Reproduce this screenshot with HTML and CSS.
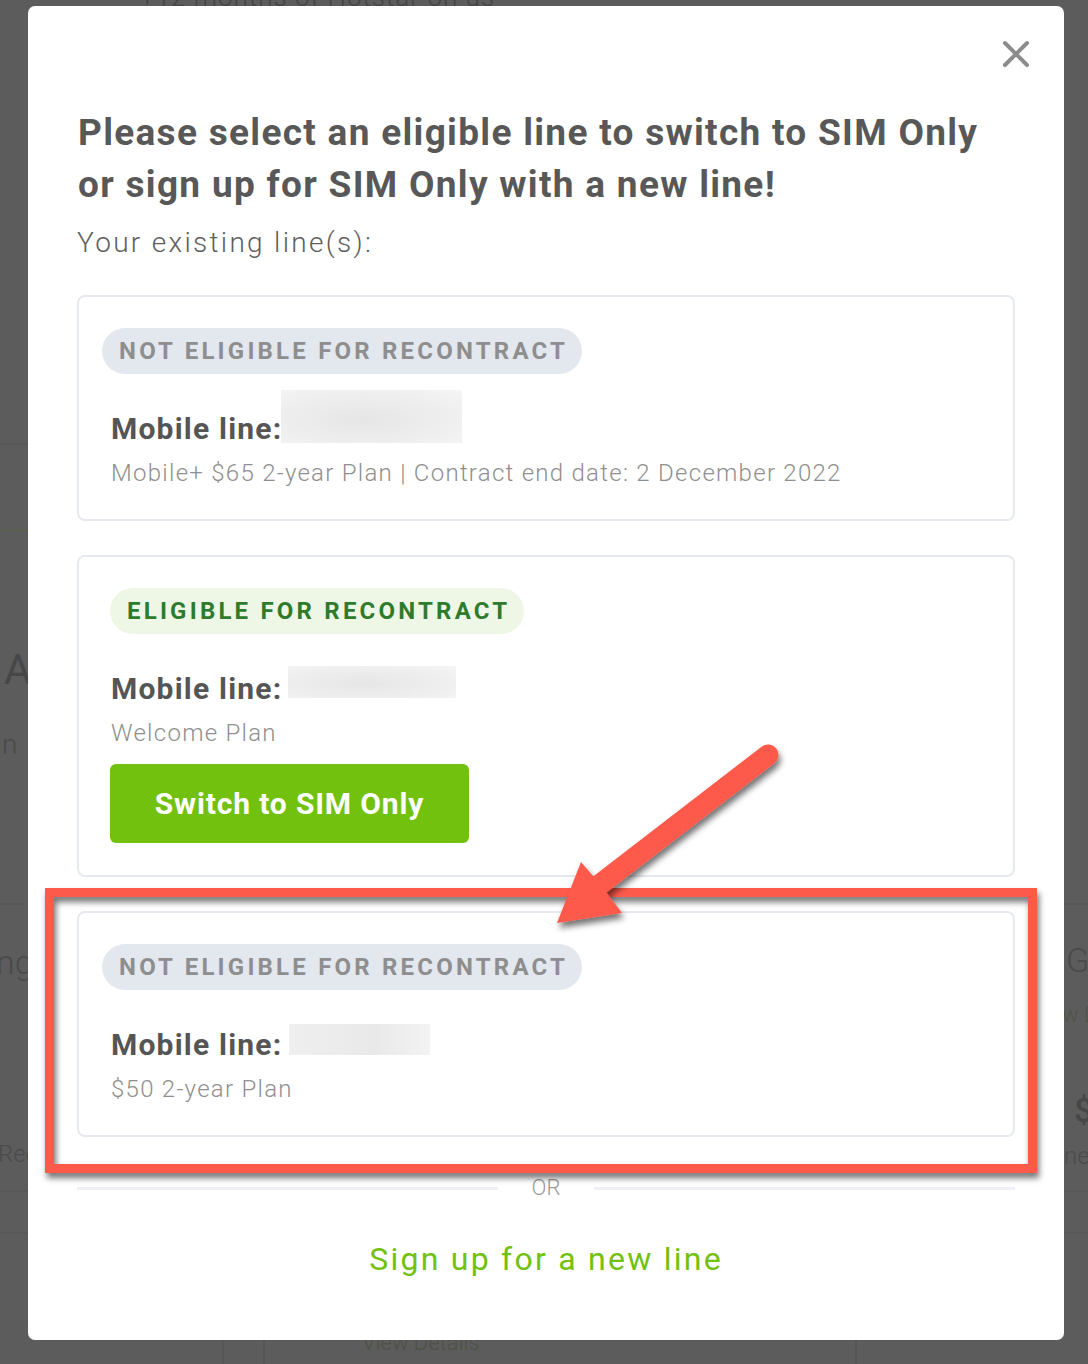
FILE: index.html
```html
<!DOCTYPE html>
<html lang="en">
<head>
<meta charset="utf-8">
<title>Switch to SIM Only</title>
<link rel="stylesheet" href="styles.css">
</head>
<body>
<div class="backdrop">
  <span class="bg-frag bg-top">+12 months of Hotstar on us</span>
  <span class="bg-rule bg-rule-a"></span>
  <span class="bg-rule bg-rule-green"></span>
  <span class="bg-frag bg-a">A</span>
  <span class="bg-frag bg-n">n</span>
  <span class="bg-rule bg-rule-b"></span>
  <span class="bg-frag bg-ng">ng</span>
  <span class="bg-frag bg-red">Rec</span>
  <span class="bg-rule bg-rule-c"></span>
  <span class="bg-rule bg-rule-d"></span>
  <span class="bg-frag bg-g">G</span>
  <span class="bg-frag bg-wd">w D</span>
  <span class="bg-frag bg-dollar">$</span>
  <span class="bg-frag bg-ne">ne</span>
  <span class="bg-vline bg-v1"></span>
  <span class="bg-vline bg-v2"></span>
  <span class="bg-vline bg-v3"></span>
  <span class="bg-frag bg-view">View Details</span>
</div>

<div class="modal">
  <div class="modal-top">
    <button class="close" aria-label="Close">
      <svg width="28" height="28" viewBox="0 0 28 28"><path d="M3 3 L25 25 M25 3 L3 25" stroke="#8c8c8c" stroke-width="4" stroke-linecap="round" fill="none"/></svg>
    </button>
  </div>
  <h1 class="title">Please select an eligible line to switch to SIM Only<br>or sign up for SIM Only with a new line!</h1>
  <p class="subtitle">Your existing line(s):</p>

  <div class="lines">
    <div class="card">
      <span class="badge badge-no">NOT ELIGIBLE FOR RECONTRACT</span>
      <div class="line-row"><span class="line-label">Mobile line:</span><span class="redacted r1"></span></div>
      <p class="plan">Mobile+ $65 2-year Plan | Contract end date: 2 December 2022</p>
    </div>
    <div class="card">
      <span class="badge badge-yes">ELIGIBLE FOR RECONTRACT</span>
      <div class="line-row"><span class="line-label">Mobile line:</span><span class="redacted r2"></span></div>
      <p class="plan">Welcome Plan</p>
      <button class="switch">Switch to SIM Only</button>
    </div>
    <div class="card">
      <span class="badge badge-no">NOT ELIGIBLE FOR RECONTRACT</span>
      <div class="line-row"><span class="line-label">Mobile line:</span><span class="redacted r3"></span></div>
      <p class="plan">$50 2-year Plan</p>
    </div>
  </div>

  <div class="divider"><span class="rule"></span><span class="or">OR</span><span class="rule"></span></div>
  <div class="signup-wrap"><a class="signup" href="#">Sign up for a new line</a></div>
</div>

<svg class="annotation" width="1088" height="1364" viewBox="0 0 1088 1364">
  <defs>
    <filter id="shadow" x="-10%" y="-10%" width="120%" height="130%">
      <feDropShadow dx="2" dy="5" stdDeviation="3" flood-color="#000" flood-opacity="0.55"/>
    </filter>
  </defs>
  <rect x="49.5" y="892.5" width="983" height="276" fill="none" stroke="#fe5a4b" stroke-width="9" filter="url(#shadow)"/>
  <g filter="url(#shadow)" fill="#fe5a4b">
    <path d="M768 755 L594 889" stroke="#fe5a4b" stroke-width="21" stroke-linecap="round" fill="none"/>
    <polygon points="557,923 581,862 600,884 622,913"/>
  </g>
</svg>
</body>
</html>
```

FILE: styles.css
```css
* { box-sizing: border-box; }

html, body {
  margin: 0;
  padding: 0;
}

body {
  width: 1088px;
  height: 1364px;
  background: #5c5c5c;
  font-family: Roboto, "Liberation Sans", Arial, sans-serif;
  overflow: hidden;
  position: relative;
}

/* underlying page, dimmed by the overlay */
.backdrop {
  position: absolute;
  inset: 0;
  color: #484848;
}
.bg-frag { position: absolute; white-space: nowrap; font-weight: 300; }
.bg-top { left: 140px; top: -18px; font-size: 26px; letter-spacing: 1px; color: #444; }
.bg-a { left: 4px; top: 645px; font-size: 42px; font-weight: 400; color: #474747; }
.bg-n { left: 2px; top: 728px; font-size: 28px; color: #4a4a4a; }
.bg-ng { left: -4px; top: 942px; font-size: 34px; color: #4a4a4a; }
.bg-red { left: -2px; top: 1140px; font-size: 24px; color: #4b4b4b; }
.bg-g { left: 1066px; top: 940px; font-size: 34px; color: #4a4a4a; }
.bg-wd { left: 1062px; top: 1002px; font-size: 22px; color: #4e5446; }
.bg-dollar { left: 1074px; top: 1090px; font-size: 34px; font-weight: 500; color: #474747; }
.bg-ne { left: 1064px; top: 1142px; font-size: 24px; color: #4b4b4b; }
.bg-view { left: 362px; top: 1330px; font-size: 22px; color: #4c5244; }
.bg-rule { position: absolute; height: 2px; background: #555; }
.bg-rule-a { left: 0; width: 28px; top: 443px; background: #575757; }
.bg-rule-green { left: 0; width: 28px; top: 529px; background: #59604e; }
.bg-rule-b { left: 0; width: 1088px; top: 903px; background: #585858; }
.bg-rule-c { left: 0; width: 1088px; top: 1190px; background: #585858; }
.bg-rule-d { left: 0; width: 1088px; top: 1232px; background: #585858; }
.bg-vline { position: absolute; width: 2px; top: 1340px; height: 24px; background: #565656; }
.bg-v1 { left: 222px; }
.bg-v2 { left: 263px; }
.bg-v3 { left: 855px; }

/* modal */
.modal {
  position: absolute;
  left: 28px;
  top: 6px;
  width: 1036px;
  height: 1334px;
  background: #fff;
  border-radius: 7px;
  padding: 0 49px 0 49px;
  display: flex;
  flex-direction: column;
}

.modal-top {
  display: flex;
  justify-content: flex-end;
  margin-top: 34px;
  margin-right: -15px;
  height: 28px;
}
.close {
  border: 0;
  padding: 0;
  background: none;
  width: 28px;
  height: 28px;
  display: block;
}
.close svg { display: block; }

.title {
  margin: 39px 0 0 1px;
  font-size: 37px;
  line-height: 52px;
  font-weight: 700;
  color: #585858;
  letter-spacing: 1.3px;
  white-space: nowrap;
}

.subtitle {
  margin: 14px 0 0 0;
  font-size: 28px;
  line-height: 36px;
  font-weight: 300;
  color: #5e5e5e;
  letter-spacing: 2.3px;
}

.lines {
  margin-top: 34px;
  display: flex;
  flex-direction: column;
  gap: 34px;
}

.card {
  border: 2px solid #e6e9ef;
  border-radius: 8px;
  padding: 31px 30px 30px 32px;
  display: flex;
  flex-direction: column;
  align-items: flex-start;
}

.badge {
  display: inline-flex;
  align-items: center;
  height: 46px;
  padding: 0 14px 0 17px;
  border-radius: 23px;
  font-size: 24px;
  font-weight: 700;
  letter-spacing: 3.2px;
  white-space: nowrap;
}
.badge-no {
  margin-left: -9px;
  background: #e3e7ee;
  color: #8e8e8e;
}
.badge-yes {
  margin-left: -1px;
  background: #eef7e5;
  color: #2f7b2d;
}

.line-row {
  margin-top: 35px;
  display: flex;
  align-items: flex-end;
  height: 40px;
}
.line-label {
  font-size: 30px;
  line-height: 40px;
  font-weight: 700;
  color: #555;
  letter-spacing: 1.2px;
}
.redacted {
  display: block;
  background: radial-gradient(ellipse at 45% 55%, #e6e6e6 0%, #ececec 45%, #f5f5f6 100%);
}
.r1 { width: 181px; height: 53px; margin: -19px 0 6px -1px; }
.r2 { width: 168px; height: 32px; margin: 0 0 11px 6px; }
.r3 { width: 141px; height: 31px; margin: 0 0 10px 7px; background: linear-gradient(90deg, #efefef, #e9e9e9 60%, #f3f3f3); }

.plan {
  margin: 8px 0 0 0;
  font-size: 24px;
  line-height: 32px;
  font-weight: 300;
  color: #8f8f8f;
  letter-spacing: 1.27px;
}

.switch {
  margin: 15px 0 2px -1px;
  width: 359px;
  height: 79px;
  border: 0;
  border-radius: 6px;
  background: #72c10f;
  color: #fff;
  font-family: inherit;
  font-size: 30px;
  font-weight: 700;
  letter-spacing: 0.85px;
}

.divider {
  margin-top: 39px;
  height: 24px;
  display: flex;
  align-items: center;
  gap: 34px;
}
.divider .rule {
  flex: 1;
  height: 3px;
  background: #eff0f5;
}
.divider .or {
  font-size: 22px;
  font-weight: 300;
  color: #9a9a9a;
  line-height: 24px;
}

.signup-wrap {
  margin-top: 39px;
  display: flex;
  justify-content: center;
}
.signup {
  font-size: 32px;
  line-height: 40px;
  font-weight: 400;
  color: #72c10f;
  text-decoration: none;
  letter-spacing: 2.25px;
}

.annotation {
  position: absolute;
  left: 0;
  top: 0;
  pointer-events: none;
}
```
